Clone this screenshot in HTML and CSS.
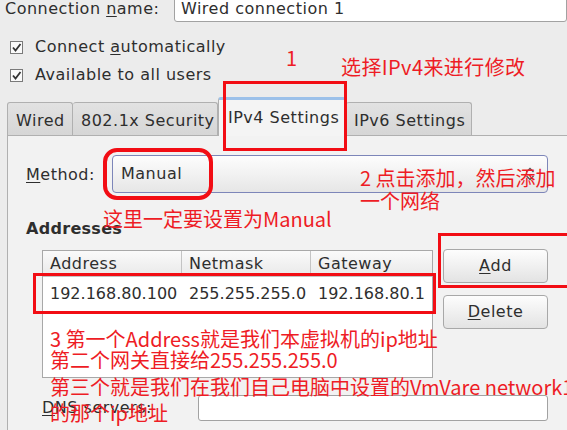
FILE: index.html
```html
<!DOCTYPE html>
<html>
<head>
<meta charset="utf-8">
<link rel="stylesheet" href="styles.css">
</head>
<body>
<div class="dialog">
  <div class="name-row">
    <span class="label">Connection <u>n</u>ame:</span>
    <div class="entry name-entry">Wired connection 1</div>
  </div>
  <div class="checks">
    <div class="check-row">
      <span class="checkbox"><svg width="11" height="11" viewBox="0 0 11 11"><path d="M2 5.5 L4.5 8.5 L9.5 2" fill="none" stroke="#333" stroke-width="1.8"/></svg></span>
      <span>Connect <u>a</u>utomatically</span>
    </div>
    <div class="check-row">
      <span class="checkbox"><svg width="11" height="11" viewBox="0 0 11 11"><path d="M2 5.5 L4.5 8.5 L9.5 2" fill="none" stroke="#333" stroke-width="1.8"/></svg></span>
      <span>Available to all users</span>
    </div>
  </div>
  <div class="tabs">
    <div class="tab tab-wired">Wired</div>
    <div class="tab tab-sec">802.1x Security</div>
    <div class="tab tab-active">IPv4 Settings</div>
    <div class="tab tab-v6">IPv6 Settings</div>
  </div>
  <div class="panel">
    <div class="method-row">
      <span class="method-label"><u>M</u>ethod:</span>
      <div class="combo">
        <span>Manual</span>
        <svg class="combo-arrow" width="10" height="14" viewBox="0 0 10 14"><path d="M1.5 5 L5 1.5 L8.5 5 M1.5 9 L5 12.5 L8.5 9" fill="none" stroke="#555" stroke-width="1.4"/></svg>
      </div>
    </div>
    <div class="heading">Addresses</div>
    <div class="addr-block">
      <div class="table">
        <div class="thead">
          <div class="cell c1">Address</div>
          <div class="cell c2">Netmask</div>
          <div class="cell c3">Gateway</div>
        </div>
        <div class="trow">
          <div class="cell c1">192.168.80.100</div>
          <div class="cell c2">255.255.255.0</div>
          <div class="cell c3">192.168.80.1</div>
        </div>
      </div>
      <div class="buttons">
        <div class="button"><u>A</u>dd</div>
        <div class="button"><u>D</u>elete</div>
      </div>
    </div>
    <div class="dns-row">
      <span class="dns-label"><u>D</u>NS servers:</span>
      <div class="entry dns-entry"></div>
    </div>
  </div>
</div>

<div class="ann ann-1">1</div>
<div class="ann ann-select">选择IPv4来进行修改</div>
<div class="box box-tab"></div>
<div class="box box-manual"></div>
<div class="ann ann-2a">2 点击添加，然后添加</div>
<div class="ann ann-2b">一个网络</div>
<div class="ann ann-manual">这里一定要设置为Manual</div>
<div class="box box-add"></div>
<div class="box box-row"></div>
<div class="ann ann-3a">3 第一个Address就是我们本虚拟机的ip地址</div>
<div class="ann ann-3b">第二个网关直接给255.255.255.0</div>
<div class="ann ann-3c">第三个就是我们在我们自己电脑中设置的VmVare network1</div>
<div class="ann ann-3d">的那个ip地址</div>
</body>
</html>
```

FILE: styles.css
```css
html, body {
  margin: 0;
  padding: 0;
}
body {
  width: 567px;
  height: 430px;
  overflow: hidden;
  position: relative;
  background: #ececec;
  font-family: "DejaVu Sans", sans-serif;
  font-size: 16px;
  line-height: 20px;
  letter-spacing: 0.5px;
  color: #2e2e2e;
}
u {
  text-decoration: underline;
  text-underline-offset: 2px;
}
.dialog {
  display: flex;
  flex-direction: column;
}
.name-row {
  display: flex;
  align-items: flex-end;
  margin-top: -14px;
  height: 36px;
}
.label {
  margin-left: 5px;
  width: 172px;
  margin-bottom: 3px;
}
.entry {
  background: #ffffff;
  border: 1px solid #a2a2a2;
  border-radius: 3px;
  box-sizing: border-box;
}
.name-entry {
  width: 400px;
  height: 36px;
  padding: 12px 6px 2px 6px;
}
.checks {
  margin-top: 11px;
  display: flex;
  flex-direction: column;
}
.check-row {
  height: 28px;
  display: flex;
  align-items: center;
  padding-left: 10px;
}
.checkbox {
  width: 13px;
  height: 13px;
  box-sizing: border-box;
  border: 1px solid #7a7a7a;
  background: #fafafa;
  display: flex;
  align-items: center;
  justify-content: center;
  margin-right: 12px;
}
.tabs {
  margin-top: 8px;
  padding-left: 7px;
  display: flex;
  align-items: flex-end;
  height: 38px;
  position: relative;
  z-index: 2;
}
.tab {
  box-sizing: border-box;
  height: 33px;
  border: 1px solid #b0b0b0;
  border-bottom: none;
  border-radius: 3px 3px 0 0;
  background: linear-gradient(#e2e2e2, #d6d6d6);
  padding: 8px 0 0 8px;
  white-space: nowrap;
}
.tab-wired { width: 66px; }
.tab-sec { width: 145px; border-left: none; }
.tab-active {
  width: 128px;
  height: 39px;
  margin-bottom: -1px;
  background: #f4f4f4;
  border-top: 3px solid #9cc1ea;
  border-color: #b0b0b0;
  border-top-color: #9cc1ea;
  padding: 8px 0 0 9px;
}
.tab-v6 { width: 126px; border-left: none; }
.panel {
  margin-left: 7px;
  width: 600px;
  height: 320px;
  box-sizing: border-box;
  border-top: 1px solid #b0b0b0;
  border-left: 1px solid #b0b0b0;
  background: #f2f2f2;
  padding: 19px 0 0 18px;
  display: flex;
  flex-direction: column;
}
.method-row {
  display: flex;
  align-items: center;
}
.method-label {
  width: 86px;
  padding-top: 2px;
}
.combo {
  width: 436px;
  height: 38px;
  box-sizing: border-box;
  border: 1px solid #7d86b9;
  border-radius: 4px;
  background: linear-gradient(#fdfdfd, #e6e6e6);
  display: flex;
  align-items: center;
  justify-content: space-between;
  padding: 0 12px 0 8px;
}
.combo-arrow {
  display: block;
}
.heading {
  margin-top: 26px;
  font-weight: bold;
  letter-spacing: 0.3px;
}
.addr-block {
  margin-top: 10px;
  padding-left: 16px;
  display: flex;
  gap: 10px;
}
.table {
  margin-top: 1px;
  width: 391px;
  height: 128px;
  box-sizing: border-box;
  border: 1px solid #a8a8a8;
  background: #ffffff;
}
.thead {
  display: flex;
  height: 26px;
  background: linear-gradient(#fafafa, #e9e9e9);
  border-bottom: 1px solid #c4c4c4;
  box-sizing: border-box;
}
.thead .cell {
  border-right: 1px solid #c4c4c4;
  padding-top: 3px;
}
.thead .c3 { border-right: none; }
.trow {
  display: flex;
  height: 34px;
  align-items: center;
  letter-spacing: 0;
}
.cell {
  box-sizing: border-box;
  padding-left: 7px;
  white-space: nowrap;
}
.c1 { width: 139px; }
.c2 { width: 129px; }
.c3 { width: 121px; }
.buttons {
  display: flex;
  flex-direction: column;
  gap: 12px;
}
.button {
  width: 105px;
  height: 34px;
  box-sizing: border-box;
  border: 1px solid #a8a8a8;
  border-radius: 4px;
  background: linear-gradient(#fdfdfd, #e3e3e3);
  display: flex;
  align-items: center;
  justify-content: center;
}
.dns-row {
  margin-top: 17px;
  padding-left: 16px;
  display: flex;
  align-items: center;
}
.dns-label {
  width: 156px;
}
.dns-entry {
  width: 350px;
  height: 26px;
}

/* annotations drawn over the screenshot */
.ann {
  position: absolute;
  font-family: "Noto Sans CJK SC", "DejaVu Sans", sans-serif;
  font-size: 20px;
  line-height: 24px;
  letter-spacing: 0;
  color: #ee1c25;
  white-space: nowrap;
  z-index: 5;
}
.box {
  position: absolute;
  box-sizing: border-box;
  border: 3px solid #f20d14;
  z-index: 4;
}
.ann-1 { left: 286px; top: 46px; }
.ann-select { left: 341px; top: 55px; letter-spacing: 0.4px; }
.box-tab { left: 223px; top: 81px; width: 124px; height: 70px; }
.box-manual { left: 103px; top: 148px; width: 110px; height: 52px; border-width: 4px; border-radius: 14px; }
.ann-2a { left: 360px; top: 166px; }
.ann-2b { left: 360px; top: 189px; }
.ann-manual { left: 103px; top: 207px; }
.box-add { left: 438px; top: 233px; width: 140px; height: 55px; }
.box-row { left: 33px; top: 273px; width: 403px; height: 41px; }
.ann-3a { left: 50px; top: 327px; }
.ann-3b { left: 50px; top: 348px; }
.ann-3c { left: 50px; top: 375px; }
.ann-3d { left: 50px; top: 401px; }
```
